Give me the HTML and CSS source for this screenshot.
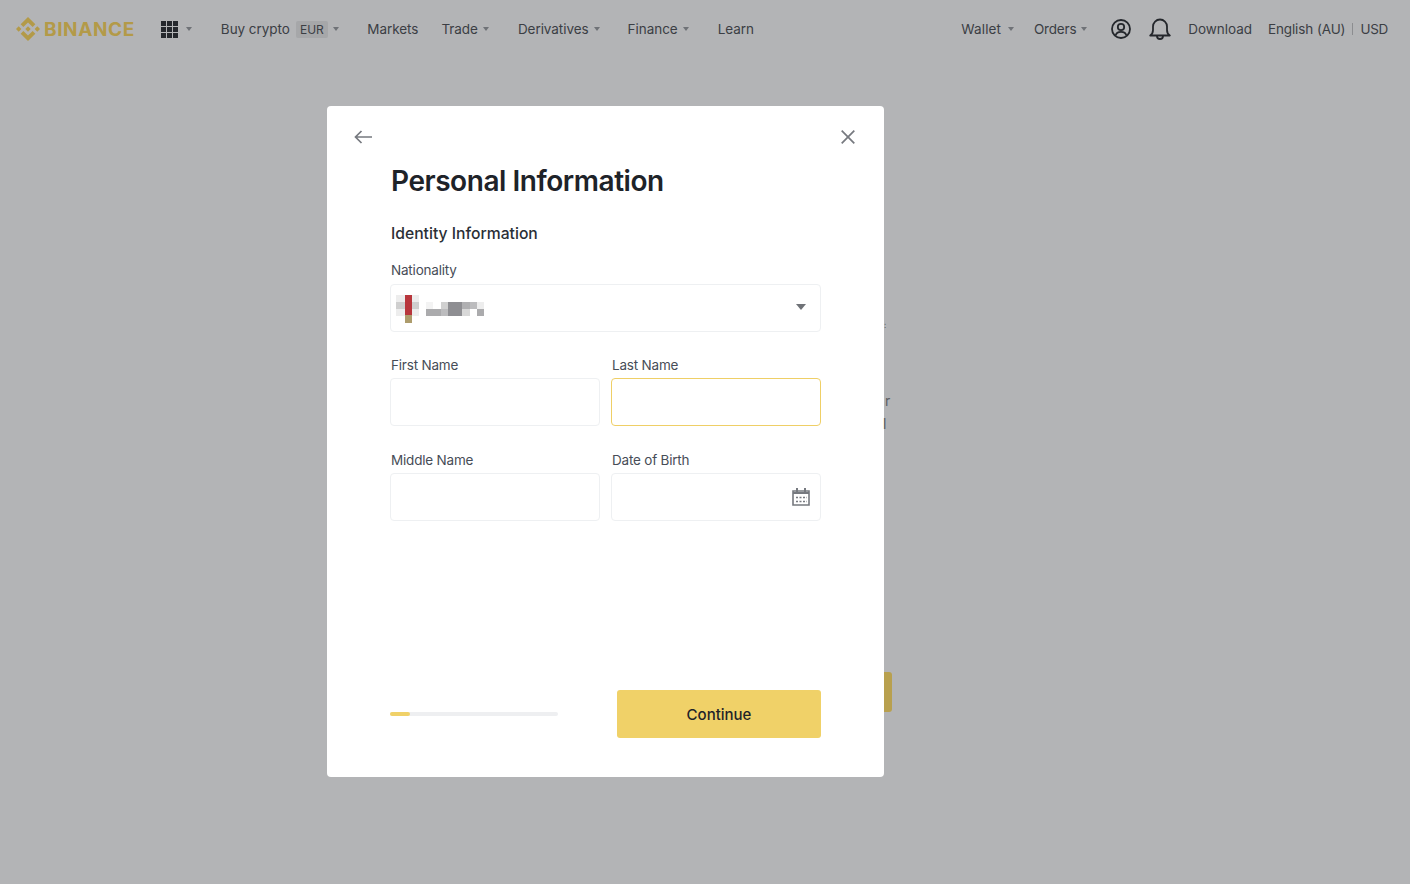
FILE: index.html
```html
<!DOCTYPE html>
<html lang="en">
<head>
<meta charset="utf-8">
<title>Personal Information</title>
<link rel="stylesheet" href="styles.css">
</head>
<body>
<header class="topbar">
  <nav class="nav nav-left">
    <a class="logo">
      <svg class="logo-mark" viewBox="0 0 32 32"><path d="M9.8 13.4 16 7.2l6.2 6.2 3.6-3.6L16 0 6.2 9.8zM0 16l3.6-3.6L7.2 16l-3.6 3.6zM9.8 18.6l6.2 6.2 6.2-6.2 3.6 3.6L16 32l-9.8-9.8zM24.8 16l3.6-3.6L32 16l-3.6 3.6zM19.6 16 16 12.4 12.4 16l3.6 3.6z"/></svg>
      <span class="logo-text">BINANCE</span>
    </a>
    <a class="item item-apps">
      <svg class="apps" viewBox="0 0 17 17"><path d="M0 0h5v5H0zM6 0h5v5H6zM12 0h5v5h-5zM0 6h5v5H0zM6 6h5v5H6zM12 6h5v5h-5zM0 12h5v5H0zM6 12h5v5H6zM12 12h5v5h-5z"/></svg>
      <i class="caret caret-apps"></i>
    </a>
    <a class="item item-buy">Buy crypto <span class="badge">EUR</span><i class="caret"></i></a>
    <a class="item item-markets">Markets</a>
    <a class="item item-trade">Trade<i class="caret"></i></a>
    <a class="item item-deriv">Derivatives<i class="caret"></i></a>
    <a class="item item-fin">Finance<i class="caret"></i></a>
    <a class="item">Learn</a>
  </nav>
  <nav class="nav nav-right">
    <a class="item item-wallet">Wallet<i class="caret"></i></a>
    <a class="item item-orders">Orders<i class="caret"></i></a>
    <svg class="icon-user" viewBox="0 0 20 20" fill="none" stroke="#24272c" stroke-width="1.8"><circle cx="10" cy="10" r="9"/><circle cx="10" cy="8" r="3.2"/><path d="M4.6 16.4c.6-2.6 2.6-3.6 5.4-3.6s4.800 1 5.400 3.600"/></svg>
    <svg class="icon-bell" viewBox="0 0 22 22" fill="none" stroke="#24272c" stroke-width="1.800"><path d="M1.200 17.500c2.300-1.500 2.800-3 2.800-5.500V8.500a7 7 0 0 1 14 0V12c0 2.500.5 4 2.800 5.500z" stroke-linejoin="round"/><path d="M8 18c0 2 1.300 3 3 3s3-1 3-3"/></svg>
    <a class="item item-dl">Download</a>
    <a class="item item-lang">English (AU)</a>
    <span class="sep"></span>
    <a class="item item-usd">USD</a>
  </nav>
</header>

<main class="stage">
  <section class="modal">
    <span class="behind behind-colon">:</span>
    <span class="behind behind-r">r</span>
    <span class="behind behind-l">l</span>
    <span class="behind-btn"></span>

    <div class="modal-bar">
      <svg class="icon-back" viewBox="0 0 18 14" fill="none" stroke="#76797f" stroke-width="1.700"><path d="M18 7H1.500M7.500 1 1.500 7l6 6"/></svg>
      <svg class="icon-close" viewBox="0 0 14 14" fill="none" stroke="#76797f" stroke-width="1.700"><path d="M.7.7l12.600 12.600M13.300.7.700 13.300"/></svg>
    </div>

    <h1 class="title">Personal Information</h1>
    <h2 class="subtitle">Identity Information</h2>

    <div class="field field-nationality">
      <label class="label">Nationality</label>
      <div class="input input-select">
        <svg class="mosaic" viewBox="0 0 88 28" shape-rendering="crispEdges">
          <path fill="#ededed" d="M0 0h9v7H0zM16 0h7v7h-7zM0 14h9v7H0zM16 14h7v7h-7z"/>
          <path fill="#cfcfcf" d="M0 7h9v7H0zM16 7h7v7h-7z"/>
          <path fill="#b8363c" d="M9 0h7v20H9z"/>
          <path fill="#ad9c6c" d="M9 20h7v8H9z"/>
          <path fill="#f3f3f3" d="M30 7h7v7h-7z"/>
          <path fill="#d0d0d0" d="M45 7h7v7h-7z"/>
          <path fill="#8e8e92" d="M52 7h14v14H52z"/>
          <path fill="#b0b0b2" d="M66 7h8v7h-8z"/>
          <path fill="#bcbcbe" d="M74 7h7v7h-7z"/>
          <path fill="#ededed" d="M81 7h7v7h-7z"/>
          <path fill="#ababad" d="M30 14h15v7H30zM81 14h7v7h-7z"/>
          <path fill="#bcbcbe" d="M45 14h7v7h-7z"/>
          <path fill="#d8d8d8" d="M66 14h8v7h-8z"/>
        </svg>
        <i class="caret caret-select"></i>
      </div>
    </div>

    <div class="grid">
      <div class="field">
        <label class="label">First Name</label>
        <div class="input"></div>
      </div>
      <div class="field">
        <label class="label">Last Name</label>
        <div class="input input-focus"></div>
      </div>
      <div class="field">
        <label class="label">Middle Name</label>
        <div class="input"></div>
      </div>
      <div class="field">
        <label class="label">Date of Birth</label>
        <div class="input input-date">
          <svg class="icon-cal" viewBox="0 0 18 18" fill="none" stroke="#76797f"><path stroke-width="1.600" d="M1 3h16v14H1z"/><path stroke-width="2" d="M1 5h16M5 0v4M13 0v4"/><path stroke-width="1.600" stroke-dasharray="2 1.500" d="M4 9.500h11M4 13.500h11"/></svg>
        </div>
      </div>
    </div>

    <div class="footer">
      <div class="progress"><div class="progress-fill"></div></div>
      <button class="continue">Continue</button>
    </div>
  </section>
</main>
</body>
</html>
```
FILE: styles.css
```css
* { box-sizing: border-box; }
html, body { height: 100%; }
body {
  margin: 0;
  background: #b3b4b6;
  font-family: "Inter", "Noto Sans", sans-serif;
  color: #1e2329;
  overflow: hidden;
}
.topbar {
  height: 58px;
  padding: 0 22px 0 16px;
  display: flex;
  align-items: center;
  justify-content: space-between;
}
.nav { display: flex; align-items: center; }
.item {
  display: flex;
  align-items: center;
  font-size: 13.500px;
  letter-spacing: -0.05px;
  color: #3b3e44;
  white-space: pre;
}
.logo { display: flex; align-items: center; margin-right: 26px; }
.logo-mark { width: 24px; height: 24px; fill: #b39a48; }
.logo-text {
  margin-left: 4px;
  font-family: "Inter", sans-serif;
  font-weight: 700;
  font-size: 19px;
  letter-spacing: 0.6px;
  color: #b39a48;
}
.apps { width: 17px; height: 17px; fill: #24272c; }
.caret {
  display: inline-block;
  width: 0;
  height: 0;
  margin-left: 5px;
  border: 3.500px solid transparent;
  border-top: 4px solid #6f7277;
  border-bottom: 0;
}
.caret-apps { margin-left: 8px; }
.item-apps { margin-right: 29px; }
.item-buy { margin-right: 28px; }
.item-markets { margin-right: 23px; }
.item-trade { margin-right: 29px; }
.item-deriv { margin-right: 28px; }
.item-fin { margin-right: 29px; }
.badge {
  margin-left: 2px;
  padding: 1px 4.500px;
  background: #a6a7a9;
  border-radius: 2px;
  font-size: 12px;
  color: #3b3e44;
}
.item-wallet { margin-right: 20px; letter-spacing: 0.1px; }
.item-wallet .caret { margin-left: 7px; }
.item-orders { margin-right: 24px; letter-spacing: -0.2px; }
.icon-user { width: 20px; height: 20px; margin-right: 18px; }
.icon-bell { width: 22px; height: 22px; margin-right: 17px; }
.item-dl { margin-right: 16px; }
.item-lang { letter-spacing: -0.1px; }
.item-usd { letter-spacing: -0.3px; }
.sep { width: 1px; height: 12px; background: #8c8d90; margin: 0 7px; }

.stage { display: flex; padding: 48px 0 0 327px; }
.modal {
  position: relative;
  width: 557px;
  height: 671px;
  padding: 0 63px 0 63px;
  background: #fff;
  border-radius: 4px;
  display: flex;
  flex-direction: column;
}
.modal-bar {
  margin: 0 -36px;
  padding-top: 24px;
  height: 50px;
  display: flex;
  justify-content: space-between;
  align-items: flex-start;
}
.icon-back { width: 18px; height: 14px; }
.icon-close { width: 14px; height: 14px; margin-right: 2px; }
.title {
  margin: 7px 0 0 1px;
  font-size: 28px;
  line-height: 36px;
  font-weight: 600;
  letter-spacing: -0.45px;
  color: #1e2329;
}
.subtitle {
  margin: 23px 0 0 1px;
  font-size: 15.700px;
  line-height: 24px;
  font-weight: 500;
  color: #2b2f36;
}
.field { display: flex; flex-direction: column; }
.label {
  display: block;
  margin: 14px 0 4px 1px;
  font-size: 13.500px;
  line-height: 20px;
  color: #474d57;
  letter-spacing: -0.2px;
}
.input {
  height: 48px;
  border: 1px solid #eef0f2;
  border-radius: 4px;
  background: #fff;
  display: flex;
  align-items: center;
}
.input-select { justify-content: space-between; padding: 0 14px 0 5px; }
.mosaic { width: 88px; height: 28px; margin-top: 1px; }
.caret-select { margin: -3px 0 0; border-width: 5px; border-top-width: 6px; border-top-color: #6f7277; border-bottom-width: 0; }
.input-focus { border-color: #efcf66; }
.input-date { justify-content: flex-end; padding-right: 10px; }
.icon-cal { width: 18px; height: 18px; }
.grid {
  display: grid;
  grid-template-columns: 210px 210px;
  column-gap: 11px;
  row-gap: 11px;
  margin-top: 10px;
}
.grid .label { margin-top: 13px; margin-bottom: 3px; }
.footer {
  margin-top: auto;
  margin-bottom: 39px;
  display: flex;
  align-items: center;
  justify-content: space-between;
}
.progress { width: 168px; height: 4px; border-radius: 2px; background: #eeeff1; }
.progress-fill { width: 20px; height: 4px; border-radius: 2px; background: #f0d168; }
.continue {
  width: 204px;
  height: 48px;
  border: 0;
  border-radius: 3px;
  background: #f0d168;
  font-family: inherit;
  font-size: 15px;
  font-weight: 500;
  color: #1e2329;
}
.behind { position: absolute; left: 100%; font-size: 14px; color: #5c5f64; line-height: 14px; }
.behind-colon { top: 212px; font-size: 8px; }
.behind-r { top: 288px; margin-left: 1px; }
.behind-l { top: 311px; margin-left: -1px; }
.behind-btn {
  position: absolute;
  left: 100%;
  top: 566px;
  width: 8px;
  height: 40px;
  border-radius: 0 3px 3px 0;
  background: #b8a04e;
}
```
